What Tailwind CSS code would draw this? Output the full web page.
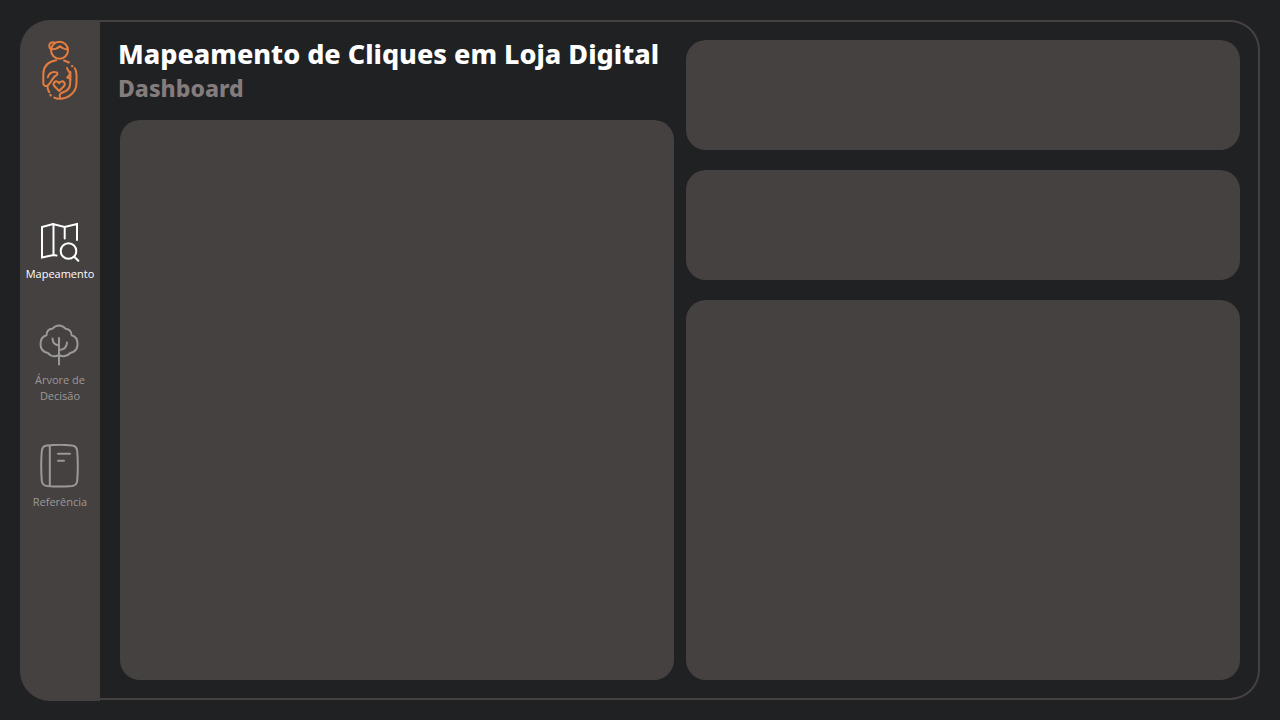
<!DOCTYPE html>
<html lang="pt-BR">
<head>
<meta charset="utf-8">
<meta name="viewport" content="width=device-width, initial-scale=1">
<title>Mapeamento de Cliques em Loja Digital</title>
<script src="https://cdn.jsdelivr.net/npm/@tailwindcss/browser@4"></script>
</head>
<body class="flex min-h-screen bg-[#202123] p-5 font-['Open_Sans','Noto_Sans',sans-serif]">
<div class="flex flex-1">
  <aside class="-mb-px flex w-20 shrink-0 flex-col items-center rounded-l-[30px] bg-[#454140] pt-5">
    <svg class="h-[60px] w-[60px] text-[#e47d3f]" viewBox="0 0 60 60" fill="none" stroke="currentColor" stroke-width="2" stroke-linecap="round" stroke-linejoin="round" role="img" aria-label="Logotipo">
      <circle cx="29.500" cy="10.300" r="8.500"/>
      <path d="M25 2.900c-2.700-1.700-5.900 0-5.800 3 .1 1.900 1 3 2.400 3.600M22 9.300c3.500 0 6-1 8-3 2 2 4.300 3 7.200 3.200"/>
      <path d="M26.200 20.300c-8.200 1.400-12.700 6.500-12.900 13.400v9.400c.1 2.700 2.300 3.500 4.100 2.700.1 3 .8 5 1.900 6.500M34 20.500l5 2"/>
      <path d="M17.800 37.300c1-3.500 3.600-5.600 7.500-5.300 2.600.1 2.900 2.500.7 3.500-3.800 1.600-4.200 7-8.600 10.300"/>
      <path d="M37 28c.3 2.500 2.800 3.300 2.800 5.500 0 2-1.500 3-2.600 4 1.400.2 3 .8 3 2.500v3c0 5.500-3.500 8.300-7.700 9.500-2.700.8-3.700 3-2.200 5.700"/>
      <path d="M40.400 40v-8M44.800 28.200c1.200 1.800 1.700 4.300 1.700 6.800v7.500c0 9.900-7.700 16.300-17.200 16.300-1.700 0-3.600-.4-5-1.200"/>
      <path d="M29.200 51l-4.700-4.700c-2.300-3 .6-5.800 3-4.600.9.400 1.400 1 1.700 1.600.3-.6.800-1.200 1.700-1.600 2.400-1.200 5.300 1.600 3 4.600z"/>
      <path d="M42.100 26.100h.1M20.500 55.200h.1" stroke-width="2.400"/>
    </svg>
    <nav class="mt-[120px] flex flex-col items-center gap-10 text-center text-[11px] leading-4 text-[#9b9998]">
      <a href="#mapeamento" class="flex flex-col items-center gap-1 text-white" aria-current="page">
        <svg class="h-[42px] w-[42px]" viewBox="0 0 42 42" fill="none" stroke="currentColor" stroke-width="2" stroke-linecap="round" stroke-linejoin="miter" aria-hidden="true">
          <path d="M38 20V4L25.500 7 14 4 3 7v30.500L14.500 35l3 .5M14.500 4v31M25.700 7v11.500"/>
          <circle cx="29.500" cy="31" r="7.800"/><path d="M35.300 36.800l4 4"/>
        </svg>
        Mapeamento
      </a>
      <a href="#arvore" class="flex flex-col items-center gap-[6px]">
        <svg class="h-11 w-11" viewBox="0 0 44 44" fill="none" stroke="currentColor" stroke-width="2" stroke-linecap="round" stroke-linejoin="round" aria-hidden="true">
          <path d="M21 42.500V16M14.500 16.500c.1 4.700 2.400 6.600 6.500 6.800M29 20.500c-.2 4.300-3 7.200-8 7.400"/>
          <path d="M21 33c-4 2.200-8.500 1.200-11.200-2C5 30 2.500 26.400 2.500 22c0-4.300 2.200-7.700 6-8.800C8.600 9 11 6.900 14.500 6.700c3.600-4.300 9.400-4.300 13 0 3.700.5 6 2.700 6.100 6.500 3.900 1 6 4.500 6 8.800 0 4.500-3 8-7.400 9-2.800 3.200-7.200 4.200-11.200 2z"/>
        </svg>
        <span>Árvore de<br>Decisão</span>
      </a>
      <a href="#referencia" class="flex flex-col items-center gap-[6px]">
        <svg class="h-11 w-11" viewBox="0 0 44 44" fill="none" stroke="currentColor" stroke-width="2" stroke-linecap="round" aria-hidden="true">
          <path d="M9 1.500c8-.8 17.500-.8 25 0 3.800.3 4.900 2.500 5.200 5.500.8 10 .8 20 0 30-.3 3.300-1.900 4.600-5.200 5-7.500.7-17 .7-25 0-3.400-.4-4.900-2-5.200-5-.8-10-.8-20 0-30 .3-3.300 1.900-5.200 5.200-5.500zM11.800 1.500v40.500M20 9.700h12M20 16.700h6"/>
        </svg>
        Referência
      </a>
    </nav>
  </aside>
  <main class="grid flex-1 grid-cols-2 gap-x-3 rounded-r-[30px] border-2 border-l-0 border-[#454140] py-[18px] pr-[18px] pl-5">
    <div class="flex flex-col">
      <header class="-ml-1 h-20 pl-[2px] font-['Noto_Sans','Open_Sans',sans-serif] font-extrabold whitespace-nowrap">
        <h1 class="text-[27px] leading-7 text-white">Mapeamento de Cliques em Loja Digital</h1>
        <h2 class="text-[23px] leading-10 text-[#847c7c]">Dashboard</h2>
      </header>
      <section class="flex-1 rounded-[20px] bg-[#454140]"></section>
    </div>
    <div class="flex flex-col gap-5">
      <section class="h-[110px] rounded-[20px] bg-[#454140]"></section>
      <section class="h-[110px] rounded-[20px] bg-[#454140]"></section>
      <section class="flex-1 rounded-[20px] bg-[#454140]"></section>
    </div>
  </main>
</div>
</body>
</html>
